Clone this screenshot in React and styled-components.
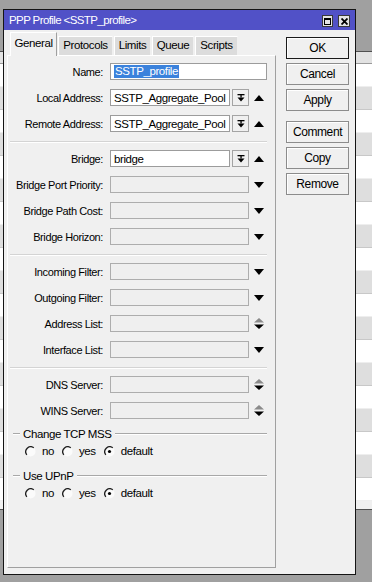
import React from "react";
import styled, { createGlobalStyle } from "styled-components";

const FONT = `"Liberation Sans", Arial, sans-serif`;

const GlobalStyle = createGlobalStyle`
  html, body {
    margin: 0;
    padding: 0;
    background: #a0a0a0;
  }
  body {
    font-family: ${FONT};
    font-size: 11px;
    letter-spacing: -0.4px;
    color: #000;
  }
`;

const Desktop = styled.div`
  position: relative;
  width: 372px;
  height: 582px;
  overflow: hidden;
  background: #a0a0a0;
`;

/* list window that sits behind the dialog */
const BackWindow = styled.div`
  position: absolute;
  left: -4px;
  right: -4px;
  top: 51px;
  height: 457px;
  display: flex;
  flex-direction: column;
  background: #f0f0f0;
  border-top: 1px solid #505050;
  border-bottom: 1px solid #505050;
`;

const BackHeader = styled.div`
  height: 11px;
  background: #e2e2e2;
  border-bottom: 1px solid #9a9a9a;
`;

const BackRow = styled.div`
  height: 22px;
  background: ${(p) => (p.$alt ? "#dedede" : "#ffffff")};
  border-bottom: 1px solid ${(p) => (p.$alt ? "#c8c8c8" : "#eeeeee")};
`;

const Dialog = styled.div`
  position: absolute;
  left: 3px;
  top: 9px;
  width: 353px;
  height: 566px;
  box-sizing: border-box;
  border: 1px solid #141414;
  background: #f0f0f0;
  display: flex;
  flex-direction: column;
`;

const TitleBar = styled.div`
  height: 20px;
  background: #5151c7;
  display: flex;
  align-items: center;
  padding: 0 5px 0 5px;
`;

const TitleText = styled.div`
  flex: 1;
  color: #fff;
  font-size: 11.5px;
  letter-spacing: -0.6px;
  white-space: nowrap;
`;

const TitleButtons = styled.div`
  display: flex;
  gap: 5px;
  margin-top: 2px;
`;

const TitleBtn = styled.div`
  width: ${(p) => p.$w}px;
  height: 12px;
  box-sizing: border-box;
  border: 1px solid #3a3a3a;
  background: #e4e4e4;
  display: flex;
  align-items: center;
  justify-content: center;
`;

const Body = styled.div`
  flex: 1;
  display: flex;
  padding: 2px 6px 6px 3px;
  gap: 10px;
`;

const TabArea = styled.div`
  width: 269px;
  display: flex;
  flex-direction: column;
`;

const TabBar = styled.div`
  display: flex;
  align-items: flex-end;
  height: 23px;
  padding-left: 3px;
  gap: 1px;
  position: relative;
  z-index: 1;
`;

const Tab = styled.div`
  box-sizing: border-box;
  width: ${(p) => p.$w}px;
  height: ${(p) => (p.$active ? 24 : 19)}px;
  margin-bottom: ${(p) => (p.$active ? -1 : 0)}px;
  padding-top: ${(p) => (p.$active ? 4 : 2)}px;
  text-align: center;
  background: ${(p) => (p.$active ? "#f0f0f0" : "#dcdcdc")};
  border-top: 1px solid #fff;
  border-left: 1px solid #fff;
  border-right: 1px solid ${(p) => (p.$active ? "#a0a0a0" : "#f0f0f0")};
  white-space: nowrap;
  font-size: 11.5px;
`;

const Panel = styled.div`
  flex: 1;
  box-sizing: border-box;
  border-top: 1px solid #fff;
  border-left: 1px solid #fff;
  border-right: 1px solid #a0a0a0;
  border-bottom: 1px solid #a0a0a0;
  padding-top: 7px;
`;

const Row = styled.div`
  display: flex;
  align-items: center;
  height: 17px;
  margin-bottom: 9px;
`;

const Label = styled.div`
  width: 95px;
  margin-right: 7px;
  text-align: right;
  white-space: nowrap;
`;

const Field = styled.div`
  box-sizing: border-box;
  width: ${(p) => p.$w}px;
  height: 17px;
  border: 1px solid ${(p) => (p.$filled ? "#9c9c9c" : "#adadad")};
  background: ${(p) => (p.$filled ? "#ffffff" : "#efefef")};
  padding-left: 3px;
  display: flex;
  align-items: center;
  white-space: nowrap;
  overflow: hidden;
  font-size: 11.5px;
`;

const Selected = styled.span`
  background: #3b82dc;
  color: #fff;
  padding: 0 1px;
  line-height: 13px;
`;

const DropBtn = styled.div`
  box-sizing: border-box;
  width: 17px;
  height: 17px;
  margin-left: 2px;
  border: 1px solid #a4a4a4;
  background: #f0f0f0;
  display: flex;
  align-items: center;
  justify-content: center;
`;

const ArrowSlot = styled.div`
  width: 10px;
  margin-left: 5px;
  display: flex;
  align-items: center;
  justify-content: center;
`;

const Separator = styled.div`
  margin: 1px 8px 7px 2px;
  border-top: 1px solid #d4d4d4;
  border-bottom: 1px solid #fff;
`;

const Group = styled.div`
  margin-top: ${(p) => p.$top}px;
`;

const GroupHeader = styled.div`
  display: flex;
  align-items: center;
  height: 12px;
  padding: 0 8px 0 5px;
  gap: 3px;
  font-size: 11.5px;
`;

const GroupLine = styled.div`
  flex: ${(p) => (p.$short ? "0 0 7px" : "1")};
  border-top: 1px solid #a8a8a8;
  border-bottom: 1px solid #fff;
`;

const RadioRow = styled.div`
  display: flex;
  align-items: center;
  height: 14px;
  margin-top: 4px;
  padding-left: 17px;
  gap: 8px;
  font-size: 11.5px;
`;

const RadioItem = styled.div`
  display: flex;
  align-items: center;
  gap: 6px;
`;

const ButtonColumn = styled.div`
  width: 63px;
  padding-top: 5px;
  display: flex;
  flex-direction: column;
`;

const Button = styled.div`
  box-sizing: border-box;
  height: 22px;
  margin-top: ${(p) => p.$gap}px;
  border: 1px solid ${(p) => (p.$default ? "#1a1a1a" : "#8c8c8c")};
  box-shadow: inset 1px 1px #fff;
  background: #f0f0f0;
  display: flex;
  align-items: center;
  justify-content: center;
  font-size: 12px;
`;

function UpArrow() {
  return (
    <svg width="10" height="6" viewBox="0 0 10 6">
      <polygon points="0,6 10,6 5,0" fill="#000" />
    </svg>
  );
}

function DownArrow() {
  return (
    <svg width="10" height="6" viewBox="0 0 10 6">
      <polygon points="0,0 10,0 5,6" fill="#000" />
    </svg>
  );
}

function UpDownArrow() {
  return (
    <svg width="10" height="11" viewBox="0 0 10 11">
      <polygon points="0,4.5 10,4.5 5,0" fill="#8a8a8a" />
      <polygon points="0,6.5 10,6.5 5,11" fill="#000" />
    </svg>
  );
}

function DropIcon() {
  return (
    <svg width="8" height="8" viewBox="0 0 8 8">
      <rect x="0.5" y="0" width="7" height="1.3" fill="#000" />
      <rect x="3.4" y="1" width="1.3" height="2.5" fill="#000" />
      <polygon points="0.5,3.5 7.5,3.5 4,7.5" fill="#000" />
    </svg>
  );
}

function Radio({ checked }) {
  return (
    <svg width="11" height="11" viewBox="0 0 11 11">
      <circle cx="5.5" cy="5.5" r="5" fill="#fbfbfb" />
      <path d="M8.8 1.8 A5 5 0 0 0 1.8 8.8" fill="none" stroke="#1e1e1e" strokeWidth="1.3" />
      {checked && <circle cx="5.5" cy="5.5" r="1.6" fill="#000" />}
    </svg>
  );
}

const ARROWS = { up: UpArrow, down: DownArrow, both: UpDownArrow };

function FormRow({ label, value, kind, arrow, selected }) {
  const Arrow = arrow ? ARROWS[arrow] : null;
  let field;
  if (kind === "full") {
    field = (
      <Field $w={157} $filled>
        {selected ? <Selected>{value}</Selected> : value}
      </Field>
    );
  } else if (kind === "drop") {
    field = (
      <>
        <Field $w={120} $filled>
          {value}
        </Field>
        <DropBtn>
          <DropIcon />
        </DropBtn>
      </>
    );
  } else {
    field = <Field $w={139} $filled={!!value}>{value}</Field>;
  }
  return (
    <Row>
      <Label>{label}</Label>
      {field}
      {Arrow && (
        <ArrowSlot>
          <Arrow />
        </ArrowSlot>
      )}
    </Row>
  );
}

const sections = [
  [
    { label: "Name:", value: "SSTP_profile", kind: "full", selected: true },
    { label: "Local Address:", value: "SSTP_Aggregate_Pool", kind: "drop", arrow: "up" },
    { label: "Remote Address:", value: "SSTP_Aggregate_Pool", kind: "drop", arrow: "up" },
  ],
  [
    { label: "Bridge:", value: "bridge", kind: "drop", arrow: "up" },
    { label: "Bridge Port Priority:", arrow: "down" },
    { label: "Bridge Path Cost:", arrow: "down" },
    { label: "Bridge Horizon:", arrow: "down" },
  ],
  [
    { label: "Incoming Filter:", arrow: "down" },
    { label: "Outgoing Filter:", arrow: "down" },
    { label: "Address List:", arrow: "both" },
    { label: "Interface List:", arrow: "down" },
  ],
  [
    { label: "DNS Server:", arrow: "both" },
    { label: "WINS Server:", arrow: "both" },
  ],
];

const tabs = [
  { t: "General", w: 47 },
  { t: "Protocols", w: 55 },
  { t: "Limits", w: 37 },
  { t: "Queue", w: 42 },
  { t: "Scripts", w: 43 },
];

const buttons = [
  { text: "OK", gap: 0, def: true },
  { text: "Cancel", gap: 4 },
  { text: "Apply", gap: 4 },
  { text: "Comment", gap: 10 },
  { text: "Copy", gap: 4 },
  { text: "Remove", gap: 4 },
];

function RadioGroup({ title, top }) {
  return (
    <Group $top={top}>
      <GroupHeader>
        <GroupLine $short />
        <span>{title}</span>
        <GroupLine />
      </GroupHeader>
      <RadioRow>
        <RadioItem>
          <Radio />
          no
        </RadioItem>
        <RadioItem>
          <Radio />
          yes
        </RadioItem>
        <RadioItem>
          <Radio checked />
          default
        </RadioItem>
      </RadioRow>
    </Group>
  );
}

export default function App() {
  return (
    <>
      <GlobalStyle />
      <Desktop>
        <BackWindow>
          <BackHeader />
          {Array.from({ length: 19 }).map((_, i) => (
            <BackRow key={i} $alt={i % 2 === 1} />
          ))}
        </BackWindow>
        <Dialog>
          <TitleBar>
            <TitleText>PPP Profile &lt;SSTP_profile&gt;</TitleText>
            <TitleButtons>
              <TitleBtn $w={11}>
                <svg width="7" height="7" viewBox="0 0 7 7">
                  <rect x="0.5" y="0.5" width="6" height="6" fill="none" stroke="#000" />
                  <rect x="0" y="0" width="7" height="2" fill="#000" />
                </svg>
              </TitleBtn>
              <TitleBtn $w={12}>
                <svg width="7" height="7" viewBox="0 0 7 7">
                  <path d="M0.5 0.5 L6.5 6.5 M6.5 0.5 L0.5 6.5" stroke="#000" strokeWidth="1.8" />
                </svg>
              </TitleBtn>
            </TitleButtons>
          </TitleBar>
          <Body>
            <TabArea>
              <TabBar>
                {tabs.map((tab, i) => (
                  <Tab key={tab.t} $w={tab.w} $active={i === 0}>
                    {tab.t}
                  </Tab>
                ))}
              </TabBar>
              <Panel>
                {sections.map((rows, si) => (
                  <React.Fragment key={si}>
                    {si > 0 && <Separator />}
                    {rows.map((r) => (
                      <FormRow key={r.label} {...r} />
                    ))}
                  </React.Fragment>
                ))}
                <RadioGroup title="Change TCP MSS" top={2} />
                <RadioGroup title="Use UPnP" top={12} />
              </Panel>
            </TabArea>
            <ButtonColumn>
              {buttons.map((b) => (
                <Button key={b.text} $gap={b.gap} $default={b.def}>
                  {b.text}
                </Button>
              ))}
            </ButtonColumn>
          </Body>
        </Dialog>
      </Desktop>
    </>
  );
}
